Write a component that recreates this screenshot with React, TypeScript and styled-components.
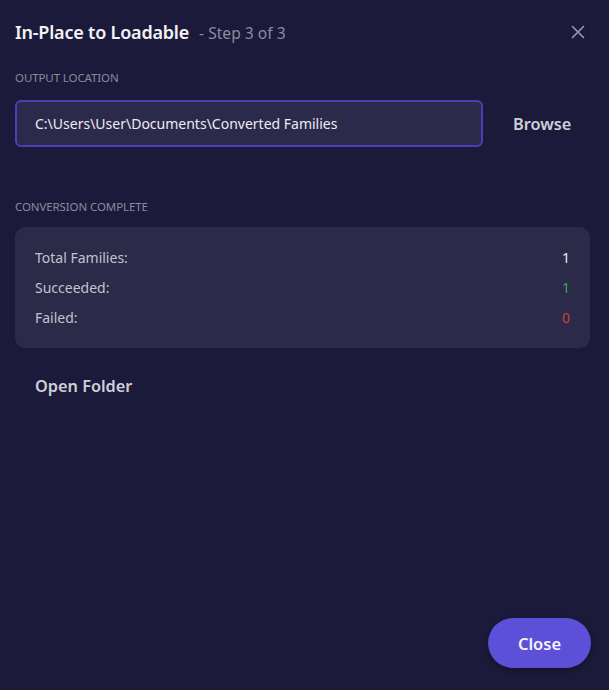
import React from "react";
import styled, { createGlobalStyle } from "styled-components";

const Global = createGlobalStyle`
  html, body { margin: 0; padding: 0; background: #1b1a3a; }
  body { font-family: "Noto Sans", "Open Sans", sans-serif; }
  * { box-sizing: border-box; }
`;

const Dialog = styled.div`
  width: 609px;
  height: 690px;
  background: #1b1a3a;
  padding: 16px 19px 22px 15px;
  display: flex;
  flex-direction: column;
  color: #e6e6ee;
`;

const Header = styled.div`
  display: flex;
  align-items: center;
  height: 32px;
`;

const Title = styled.h1`
  margin: 0;
  font-size: 18px;
  font-weight: 600;
  color: #f2f2f7;
  letter-spacing: -0.2px;
`;

const Step = styled.span`
  margin-left: 10px;
  font-size: 15.6px;
  color: #8c8ca0;
  margin-top: 2px;
`;

const CloseIcon = styled.button`
  margin-left: auto;
  margin-right: 2px;
  background: none;
  border: none;
  padding: 0;
  width: 20px;
  height: 20px;
  display: flex;
  align-items: center;
  justify-content: center;
  color: #9a9aac;
`;

const SectionLabel = styled.div<{ $top: number }>`
  margin-top: ${(p) => p.$top}px;
  font-size: 11.5px;
  line-height: 16px;
  color: #8a8a9c;
  text-transform: uppercase;
  letter-spacing: -0.1px;
`;

const PathRow = styled.div`
  display: flex;
  align-items: center;
  margin-top: 14px;
`;

const PathField = styled.div`
  width: 468px;
  height: 47px;
  border: 2px solid #4b3fb5;
  border-radius: 6px;
  background: #2c2a4a;
  display: flex;
  align-items: center;
  padding-left: 18px;
  font-size: 14px;
  color: #ececf2;
`;

const TextButton = styled.button<{ $ml: number }>`
  background: none;
  border: none;
  padding: 0;
  margin-left: ${(p) => p.$ml}px;
  font-family: inherit;
  font-size: 16.3px;
  line-height: 22px;
  font-weight: 600;
  color: #cfcfd8;
`;

const Card = styled.div`
  margin-top: 12px;
  background: #2b2a48;
  border-radius: 10px;
  padding: 16px 20px 15px 20px;
  display: flex;
  flex-direction: column;
`;

const Row = styled.div`
  display: flex;
  justify-content: space-between;
  align-items: center;
  height: 30px;
  line-height: 30px;
  font-size: 14px;
  color: #c3c3cf;
`;

const Value = styled.span<{ $color: string }>`
  color: ${(p) => p.$color};
`;

const OpenRow = styled.div`
  display: flex;
  margin-top: 27px;
  padding-left: 20px;
`;

const Spacer = styled.div`
  flex: 1;
`;

const Footer = styled.div`
  display: flex;
  justify-content: flex-end;
`;

const PrimaryButton = styled.button`
  width: 103px;
  height: 50px;
  margin-right: -1px;
  border-radius: 25px;
  border: none;
  background: #5c4fd8;
  color: #f4f4fa;
  font-family: inherit;
  font-size: 16.5px;
  font-weight: 600;
  box-shadow: 0 2px 6px rgba(0, 0, 0, 0.35);
`;

export default function App() {
  return (
    <>
      <Global />
      <Dialog>
        <Header>
          <Title>In-Place to Loadable</Title>
          <Step>- Step 3 of 3</Step>
          <CloseIcon aria-label="Close">
            <svg width="14" height="14" viewBox="0 0 14 14">
              <path d="M1.5 1.5 L12.5 12.5 M12.5 1.5 L1.5 12.5" stroke="#9a9aac" strokeWidth="1.6" strokeLinecap="round" />
            </svg>
          </CloseIcon>
        </Header>
        <SectionLabel $top={22}>Output Location</SectionLabel>
        <PathRow>
          <PathField>C:\Users\User\Documents\Converted Families</PathField>
          <TextButton $ml={30}>Browse</TextButton>
        </PathRow>
        <SectionLabel $top={52}>Conversion Complete</SectionLabel>
        <Card>
          <Row>
            <span>Total Families:</span>
            <Value $color="#eeeef4">1</Value>
          </Row>
          <Row>
            <span>Succeeded:</span>
            <Value $color="#3fa65a">1</Value>
          </Row>
          <Row>
            <span>Failed:</span>
            <Value $color="#d23a3f">0</Value>
          </Row>
        </Card>
        <OpenRow>
          <TextButton $ml={0}>Open Folder</TextButton>
        </OpenRow>
        <Spacer />
        <Footer>
          <PrimaryButton>Close</PrimaryButton>
        </Footer>
      </Dialog>
    </>
  );
}
